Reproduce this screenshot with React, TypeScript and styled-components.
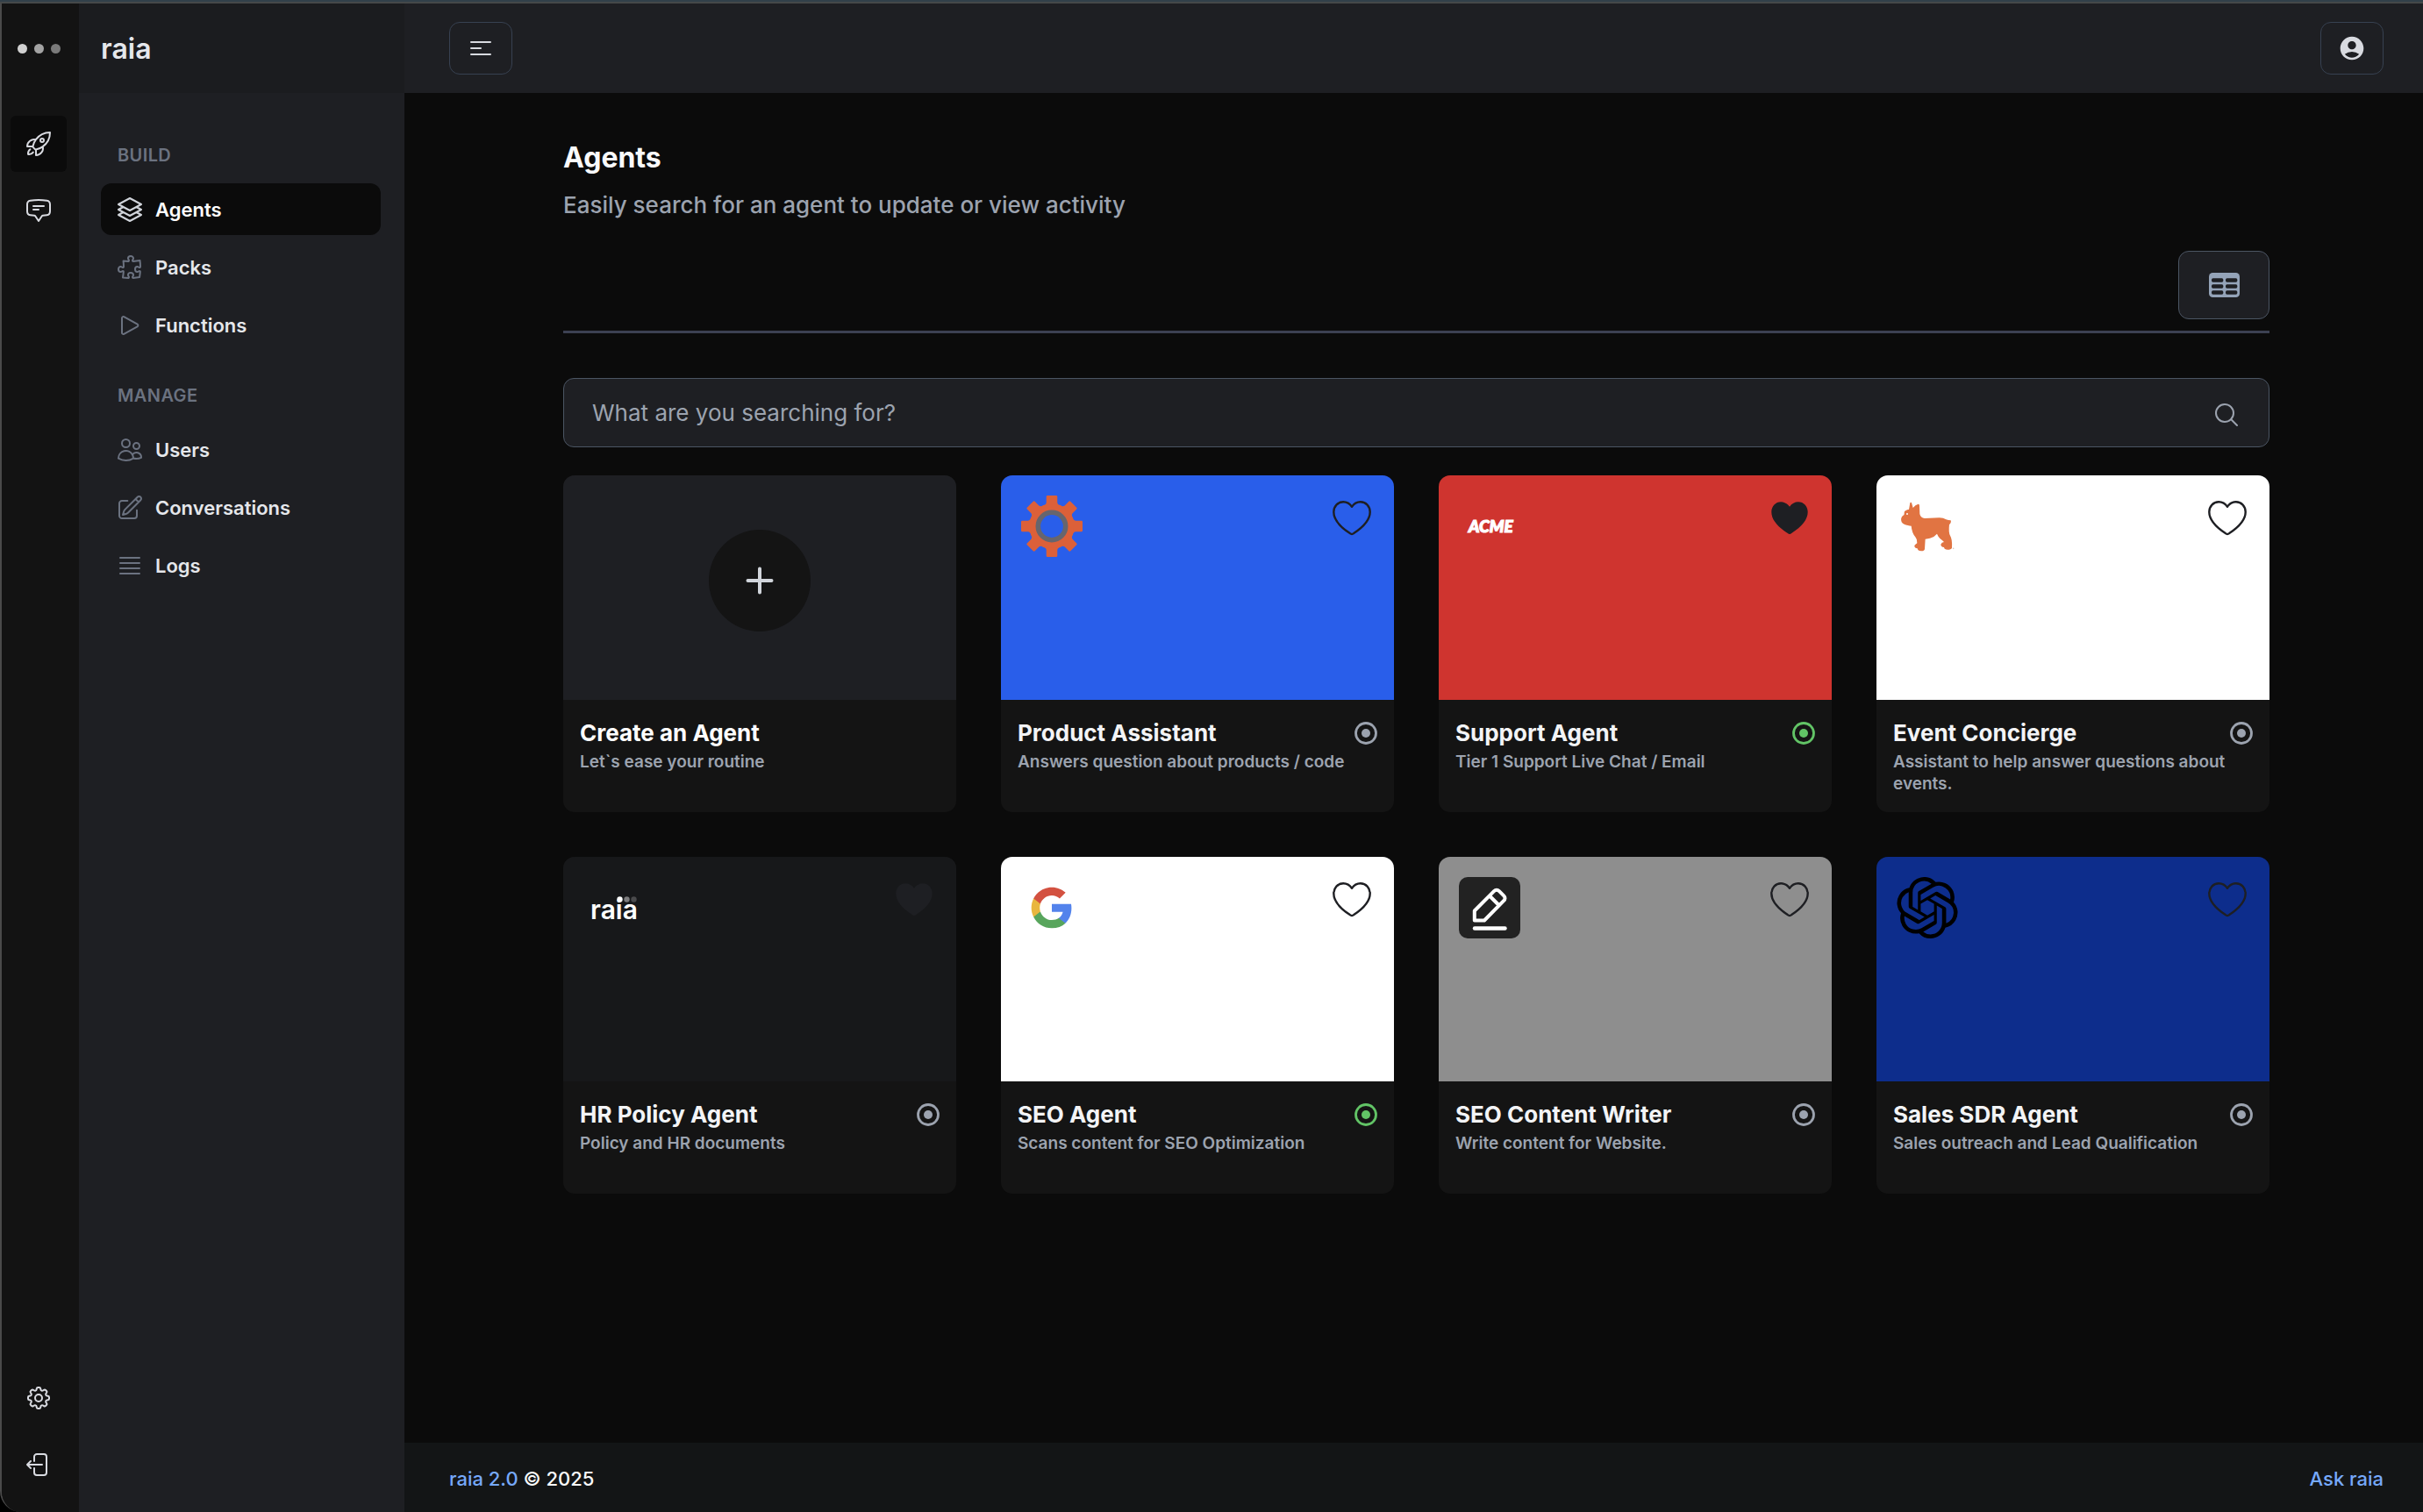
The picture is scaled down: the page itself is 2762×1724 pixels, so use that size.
import React from "react";
import styled, { createGlobalStyle } from "styled-components";
import {
  HiOutlineSquare3Stack3D,
  HiOutlinePuzzlePiece,
  HiOutlinePlay,
  HiOutlineUsers,
  HiOutlinePencilSquare,
  HiOutlineBars4,
  HiOutlineBars3CenterLeft,
  HiOutlineRocketLaunch,
  HiOutlineChatBubbleBottomCenterText,
  HiOutlineCog8Tooth,
  HiOutlineMagnifyingGlass,
} from "react-icons/hi2";
import { MdAccountCircle } from "react-icons/md";
import { SiOpenai } from "react-icons/si";

const GlobalStyle = createGlobalStyle`
  *, *::before, *::after { box-sizing: border-box; }
  body {
    margin: 0;
    background: #000;
    color: #f3f4f6;
    font-family: Inter, "Liberation Sans", sans-serif;
    -webkit-font-smoothing: antialiased;
  }
  button, input { font: inherit; color: inherit; }
  button { cursor: pointer; padding: 0; }
  h1, h2, p, ul { margin: 0; padding: 0; }
  ul { list-style: none; }
  a { text-decoration: none; color: inherit; }
  svg { display: block; flex-shrink: 0; }
`;

const Shell = styled.div`
  min-height: 100vh;
  display: flex;
  flex-direction: column;
`;

const TopEdge = styled.div`
  height: 4px;
  background: #32404a;
  border-bottom: 2px solid #454849;
`;

const Frame = styled.div`
  flex: 1;
  display: flex;
  background: #0b0b0b;
  border-left: 2px solid #4a4a4a;
  border-bottom-left-radius: 24px;
  overflow: hidden;
`;

const Rail = styled.nav`
  width: 88px;
  flex-shrink: 0;
  display: flex;
  flex-direction: column;
  align-items: center;
  gap: 12px;
  padding: 0 4px 22px 0;
  background: #131313;
`;

const Dots = styled.div`
  height: 102px;
  margin-bottom: 14px;
  display: flex;
  align-items: center;
  gap: 8px;
`;

const Dot = styled.span<{ $color: string }>`
  width: 11px;
  height: 11px;
  border-radius: 50%;
  background: ${(p) => p.$color};
`;

const RailButton = styled.button<{ $active?: boolean }>`
  width: 64px;
  height: 64px;
  display: flex;
  align-items: center;
  justify-content: center;
  border: 0;
  border-radius: 6px;
  background: ${(p) => (p.$active ? "#0b0b0b" : "transparent")};
  color: #d8dae0;
`;

const Spacer = styled.div`
  flex: 1;
`;

const Sidebar = styled.aside`
  width: 371px;
  flex-shrink: 0;
  background: #1e1f23;
`;

const Brand = styled.div`
  height: 102px;
  display: flex;
  align-items: center;
  padding: 0 25px;
  background: #1b1c1f;
  color: #e5e7eb;
  font-size: 32px;
  font-weight: 600;
`;

const Menu = styled.nav`
  padding: 54px 27px 0 25px;
  display: flex;
  flex-direction: column;
  gap: 34px;
`;

const MenuTitle = styled.h2`
  margin-bottom: 15px;
  padding-left: 19px;
  color: #6b7280;
  font-size: 20px;
  font-weight: 600;
  line-height: 34px;
  letter-spacing: 0.02em;
`;

const MenuList = styled.ul`
  display: flex;
  flex-direction: column;
  gap: 7px;
`;

const MenuLink = styled.a<{ $active?: boolean }>`
  height: 59px;
  display: flex;
  align-items: center;
  gap: 13px;
  padding: 0 17px;
  border-radius: 12px;
  background: ${(p) => (p.$active ? "#0b0b0b" : "transparent")};
  color: ${(p) => (p.$active ? "#ffffff" : "#e5e7eb")};
  font-size: 22px;
  font-weight: 600;

  svg {
    color: ${(p) => (p.$active ? "#d1d5db" : "#6b7280")};
  }
`;

const Main = styled.div`
  flex: 1;
  min-width: 0;
  display: flex;
  flex-direction: column;
`;

const Header = styled.header`
  height: 102px;
  display: flex;
  align-items: center;
  justify-content: space-between;
  padding: 0 45px 0 51px;
  background: #1e1f23;
`;

const HeaderButton = styled.button`
  width: 72px;
  height: 60px;
  display: flex;
  align-items: center;
  justify-content: center;
  border: 1px solid #374151;
  border-radius: 12px;
  background: transparent;
  color: #d8dae0;
`;

const Content = styled.main`
  flex: 1;
  padding: 54px 175px 51px 181px;
`;

const Heading = styled.h1`
  color: #f9fafb;
  font-size: 32px;
  font-weight: 700;
  line-height: 40px;
`;

const Lead = styled.p`
  margin-top: 16px;
  color: #9ca3af;
  font-size: 26px;
  font-weight: 500;
  line-height: 36px;
`;

const ViewBar = styled.div`
  margin-top: 34px;
  padding-bottom: 13px;
  display: flex;
  justify-content: flex-end;
  border-bottom: 3px solid #3c4152;
`;

const ViewButton = styled.button`
  width: 104px;
  height: 78px;
  display: flex;
  align-items: center;
  justify-content: center;
  border: 1px solid #4b5563;
  border-radius: 12px;
  background: #1e1f23;
  color: #94a3b8;
`;

const Search = styled.form`
  height: 79px;
  margin: 51px 0 32px;
  display: flex;
  align-items: center;
  padding: 0 32px;
  border: 1px solid #4b5563;
  border-radius: 12px;
  background: #1e1f23;
`;

const SearchInput = styled.input`
  flex: 1;
  height: 100%;
  padding: 0;
  border: 0;
  outline: 0;
  background: transparent;
  font-size: 26px;

  &::placeholder {
    color: #9ca3af;
    opacity: 1;
  }
`;

const SearchButton = styled.button`
  padding-top: 4px;
  border: 0;
  background: transparent;
  color: #9ca3af;
`;

const Grid = styled.ul`
  display: grid;
  grid-template-columns: repeat(4, minmax(0, 1fr));
  gap: 51px;
`;

const Card = styled.li`
  display: flex;
  flex-direction: column;
  border-radius: 13px;
  background: #141414;
  overflow: hidden;
`;

const Cover = styled.div<{ $color: string }>`
  height: 256px;
  display: flex;
  align-items: flex-start;
  justify-content: space-between;
  padding: 23px 26px 0 23px;
  background: ${(p) => p.$color};
`;

const CreateCover = styled(Cover)`
  align-items: center;
  justify-content: center;
  padding: 0 0 16px;
`;

const CreateButton = styled.button`
  width: 116px;
  height: 116px;
  display: flex;
  align-items: center;
  justify-content: center;
  border: 0;
  border-radius: 50%;
  background: #141414;
  color: #d1d5db;
`;

const LikeButton = styled.button`
  margin-top: 6px;
  border: 0;
  background: transparent;
  color: #1e1f23;
`;

const CardBody = styled.div`
  min-height: 128px;
  padding: 20px 19px;
`;

const CardHead = styled.div`
  display: flex;
  align-items: center;
  justify-content: space-between;
  margin-bottom: 2px;
`;

const CardTitle = styled.h2<{ $bright?: boolean }>`
  color: ${(p) => (p.$bright ? "#ffffff" : "#f3f4f6")};
  font-size: 26px;
  font-weight: 700;
  line-height: 36px;
`;

const CardText = styled.p`
  color: #9ca3af;
  font-size: 19px;
  font-weight: 600;
  line-height: 25px;
`;

const Footer = styled.footer`
  height: 79px;
  display: flex;
  align-items: center;
  justify-content: space-between;
  padding: 2px 45px 0 51px;
  background: #131516;
  color: #f9fafb;
  font-size: 22px;
  font-weight: 500;
`;

const FooterLink = styled.a`
  color: #76a9fa;
`;

const LogoutIcon = () => (
  <svg width="32" height="32" viewBox="0 0 24 24" fill="none" stroke="currentColor" strokeWidth="1.5" strokeLinecap="round" strokeLinejoin="round">
    <path d="M8.25 9V5.25A2.25 2.25 0 0 1 10.5 3h6a2.25 2.25 0 0 1 2.25 2.25v13.5A2.25 2.25 0 0 1 16.5 21h-6a2.25 2.25 0 0 1-2.25-2.25V15m-3 0-3-3m0 0 3-3m-3 3H15" />
  </svg>
);

const TableIcon = () => (
  <svg width="35" height="28" viewBox="0 0 105 84">
    <rect width="105" height="84" rx="13" fill="currentColor" />
    <g fill="#1e1f23">
      {[19, 40, 61].map((y) => (
        <React.Fragment key={y}>
          <rect x="9" y={y} width="40" height="13" rx="5" />
          <rect x="57" y={y} width="40" height="13" rx="5" />
        </React.Fragment>
      ))}
    </g>
  </svg>
);

const PlusIcon = () => (
  <svg width="32" height="32" viewBox="0 0 32 32" stroke="currentColor" strokeWidth="4" strokeLinecap="round">
    <path d="M16 2.5v27M2.5 16h27" />
  </svg>
);

const Heart = ({ filled }: { filled?: boolean }) => (
  <svg width="44" height="40" viewBox="0 0 44 40" fill={filled ? "currentColor" : "none"} stroke={filled ? "none" : "currentColor"} strokeWidth="2.4" strokeLinejoin="round">
    <path d="M22 6.8C19.6 3.2 16 1.3 12.2 1.3 6 1.3 1.3 6.2 1.3 12.8 1.3 21.5 8 29.3 19.8 37.1Q22 38.8 24.2 37.1C36 29.3 42.7 21.5 42.7 12.8 42.7 6.2 38 1.3 31.8 1.3 28 1.3 24.4 3.2 22 6.8Z" />
  </svg>
);

const Status = ({ live }: { live?: boolean }) => (
  <svg width="26" height="26" viewBox="0 0 26 26" role="img" aria-label={live ? "Live" : "Inactive"} color={live ? "#62c466" : "#9ca3af"}>
    <circle cx="13" cy="13" r="11.5" fill="none" stroke="currentColor" strokeWidth="2.8" />
    <circle cx="13" cy="13" r="5" fill="currentColor" />
  </svg>
);

const GearLogo = () => (
  <svg width="70" height="70" viewBox="-106 -106 212 212">
    <g fill="#dc6039">
      {[0, 45, 90, 135, 180, 225, 270, 315].map((angle) => (
        <path key={angle} transform={`rotate(${angle})`} d="M-19-102q0-4 4-4h30q4 0 4 4v20q1 8 12 10v14h-62v-14q11-2 12-10z" />
      ))}
    </g>
    <circle r="64" fill="none" stroke="#dc6039" strokeWidth="22" />
    <circle r="47.5" fill="#295eea" stroke="#67656d" strokeWidth="17" />
  </svg>
);

const AcmeLogo = () => (
  <svg width="70" height="70" viewBox="0 0 70 70">
    <text x="11" y="42" fill="#fff" stroke="#fff" strokeWidth="1.2" fontFamily="Lato, sans-serif" fontSize="19" fontWeight="900" fontStyle="italic">ACME</text>
  </svg>
);

const DogLogo = () => (
  <svg width="70" height="70" viewBox="126 105 210 210">
    <path
      fill="#e17442"
      d="M172 130Q175 126 177 130L182 147Q190 137 200 134Q204 134 204 140L205 168Q208 182 222 183L272 181Q286 181 295 187Q303 190 311 190Q314 196 309 202L306 204Q303 232 309 242Q317 255 315 284Q312 290 300 290Q289 290 288 282Q277 281 277 272Q280 265 288 264Q282 258 275 253Q268 246 264 236Q254 248 240 251L224 254L222 288Q221 295 210 295Q198 295 197 286Q186 285 187 276Q191 271 196 268Q197 255 190 247Q178 232 176 209Q170 209 164 207Q150 206 143 196Q138 182 147 174Q152 172 152 168Q151 158 158 156Q164 152 168 153Z"
    />
    <circle cx="162" cy="168" r="3" fill="#fff" />
    <circle cx="320" cy="286" r="2.5" fill="#d9c9c0" />
  </svg>
);

const RaiaLogo = () => (
  <svg width="70" height="70" viewBox="0 0 70 70">
    <text x="8" y="48" fill="#fff" fontFamily="Inter, sans-serif" fontSize="30" fontWeight="600">raia</text>
    <circle cx="41.5" cy="25.5" r="3.2" fill="#fff" />
    <circle cx="49.5" cy="25.5" r="3.2" fill="#7d7d7f" />
    <circle cx="57.5" cy="25.5" r="3.2" fill="#4a4a4c" />
  </svg>
);

const GoogleLogo = () => (
  <svg width="70" height="70" viewBox="-4.5 -4.5 33 33">
    <path fill="#5383ec" d="M22.56 12.25c0-.78-.07-1.53-.2-2.25H12v4.26h5.92c-.26 1.37-1.04 2.53-2.21 3.31v2.77h3.57c2.08-1.92 3.28-4.74 3.28-8.09z" />
    <path fill="#58a55c" d="M12 23c2.97 0 5.46-.98 7.28-2.66l-3.57-2.77c-.98.66-2.23 1.06-3.71 1.06-2.86 0-5.29-1.93-6.16-4.53H2.18v2.84C3.99 20.53 7.7 23 12 23z" />
    <path fill="#e9b63e" d="M5.84 14.09c-.22-.66-.35-1.36-.35-2.09s.13-1.43.35-2.09V7.07H2.18C1.43 8.55 1 10.22 1 12s.43 3.45 1.18 4.93l2.85-2.22.81-.62z" />
    <path fill="#d35140" d="M12 5.38c1.62 0 3.06.56 4.21 1.64l3.15-3.15C17.45 2.09 14.97 1 12 1 7.7 1 3.99 3.47 2.18 7.07l3.66 2.84c.87-2.6 3.3-4.53 6.16-4.53z" />
  </svg>
);

const PencilLogo = () => (
  <svg width="70" height="70" viewBox="0 0 70 70" fill="none" stroke="#fff" strokeWidth="4">
    <rect width="70" height="70" rx="10" fill="#222" stroke="none" />
    <path strokeLinejoin="round" d="M17.8 49.5V38.5L40 16.2Q43 13.2 46 16.2L51 21.2Q54 24.2 51 27.2L29 49.5Z" />
    <path d="M35 21.5L45.5 32" />
    <path strokeWidth="4.5" strokeLinecap="round" d="M18 58.5h34.5" />
  </svg>
);

type Agent = {
  name: string;
  text: string;
  color: string;
  logo: React.ReactNode;
  liked?: boolean;
  live?: boolean;
};

const agents: Agent[] = [
  { name: "Product Assistant", text: "Answers question about products / code", color: "#295eea", logo: <GearLogo /> },
  { name: "Support Agent", text: "Tier 1 Support Live Chat / Email", color: "#cf342f", logo: <AcmeLogo />, liked: true, live: true },
  { name: "Event Concierge", text: "Assistant to help answer questions about events.", color: "#ffffff", logo: <DogLogo /> },
  { name: "HR Policy Agent", text: "Policy and HR documents", color: "#17181a", logo: <RaiaLogo />, liked: true },
  { name: "SEO Agent", text: "Scans content for SEO Optimization", color: "#ffffff", logo: <GoogleLogo />, live: true },
  { name: "SEO Content Writer", text: "Write content for Website.", color: "#8e8e8e", logo: <PencilLogo /> },
  { name: "Sales SDR Agent", text: "Sales outreach and Lead Qualification", color: "#0d2d8c", logo: <SiOpenai size={70} color="#000" /> },
];

const menu = [
  {
    title: "BUILD",
    items: [
      { label: "Agents", icon: HiOutlineSquare3Stack3D, active: true },
      { label: "Packs", icon: HiOutlinePuzzlePiece },
      { label: "Functions", icon: HiOutlinePlay },
    ],
  },
  {
    title: "MANAGE",
    items: [
      { label: "Users", icon: HiOutlineUsers },
      { label: "Conversations", icon: HiOutlinePencilSquare },
      { label: "Logs", icon: HiOutlineBars4 },
    ],
  },
];

export default function App() {
  return (
    <Shell>
      <GlobalStyle />
      <TopEdge />
      <Frame>
        <Rail aria-label="Workspace">
          <Dots>
            <Dot $color="#d0d0d0" />
            <Dot $color="#a3a3a3" />
            <Dot $color="#7a7a7a" />
          </Dots>
          <RailButton $active aria-label="Launch pad">
            <HiOutlineRocketLaunch size={32} />
          </RailButton>
          <RailButton aria-label="Chat">
            <HiOutlineChatBubbleBottomCenterText size={32} />
          </RailButton>
          <Spacer />
          <RailButton aria-label="Settings">
            <HiOutlineCog8Tooth size={32} />
          </RailButton>
          <RailButton aria-label="Log out">
            <LogoutIcon />
          </RailButton>
        </Rail>

        <Sidebar>
          <Brand>raia</Brand>
          <Menu aria-label="Main">
            {menu.map((group) => (
              <section key={group.title}>
                <MenuTitle>{group.title}</MenuTitle>
                <MenuList>
                  {group.items.map(({ label, icon: Icon, active }: any) => (
                    <li key={label}>
                      <MenuLink href="#" $active={active}>
                        <Icon size={32} />
                        {label}
                      </MenuLink>
                    </li>
                  ))}
                </MenuList>
              </section>
            ))}
          </Menu>
        </Sidebar>

        <Main>
          <Header>
            <HeaderButton aria-label="Toggle menu">
              <HiOutlineBars3CenterLeft size={32} />
            </HeaderButton>
            <HeaderButton aria-label="Account">
              <MdAccountCircle size={32} />
            </HeaderButton>
          </Header>

          <Content>
            <Heading>Agents</Heading>
            <Lead>Easily search for an agent to update or view activity</Lead>
            <ViewBar>
              <ViewButton aria-label="Table view">
                <TableIcon />
              </ViewButton>
            </ViewBar>
            <Search onSubmit={(e) => e.preventDefault()}>
              <SearchInput type="text" aria-label="Search agents" placeholder="What are you searching for?" />
              <SearchButton type="submit" aria-label="Search">
                <HiOutlineMagnifyingGlass size={32} />
              </SearchButton>
            </Search>
            <Grid>
              <Card>
                <CreateCover $color="#1e1f23">
                  <CreateButton aria-label="Create an agent">
                    <PlusIcon />
                  </CreateButton>
                </CreateCover>
                <CardBody>
                  <CardHead>
                    <CardTitle $bright>Create an Agent</CardTitle>
                  </CardHead>
                  <CardText>Let`s ease your routine</CardText>
                </CardBody>
              </Card>
              {agents.map((agent) => (
                <Card key={agent.name}>
                  <Cover $color={agent.color}>
                    {agent.logo}
                    <LikeButton aria-label={`Favourite ${agent.name}`} aria-pressed={!!agent.liked}>
                      <Heart filled={agent.liked} />
                    </LikeButton>
                  </Cover>
                  <CardBody>
                    <CardHead>
                      <CardTitle>{agent.name}</CardTitle>
                      <Status live={agent.live} />
                    </CardHead>
                    <CardText>{agent.text}</CardText>
                  </CardBody>
                </Card>
              ))}
            </Grid>
          </Content>

          <Footer>
            <span>
              <FooterLink href="#">raia 2.0</FooterLink> © 2025
            </span>
            <FooterLink href="#">Ask raia</FooterLink>
          </Footer>
        </Main>
      </Frame>
    </Shell>
  );
}
